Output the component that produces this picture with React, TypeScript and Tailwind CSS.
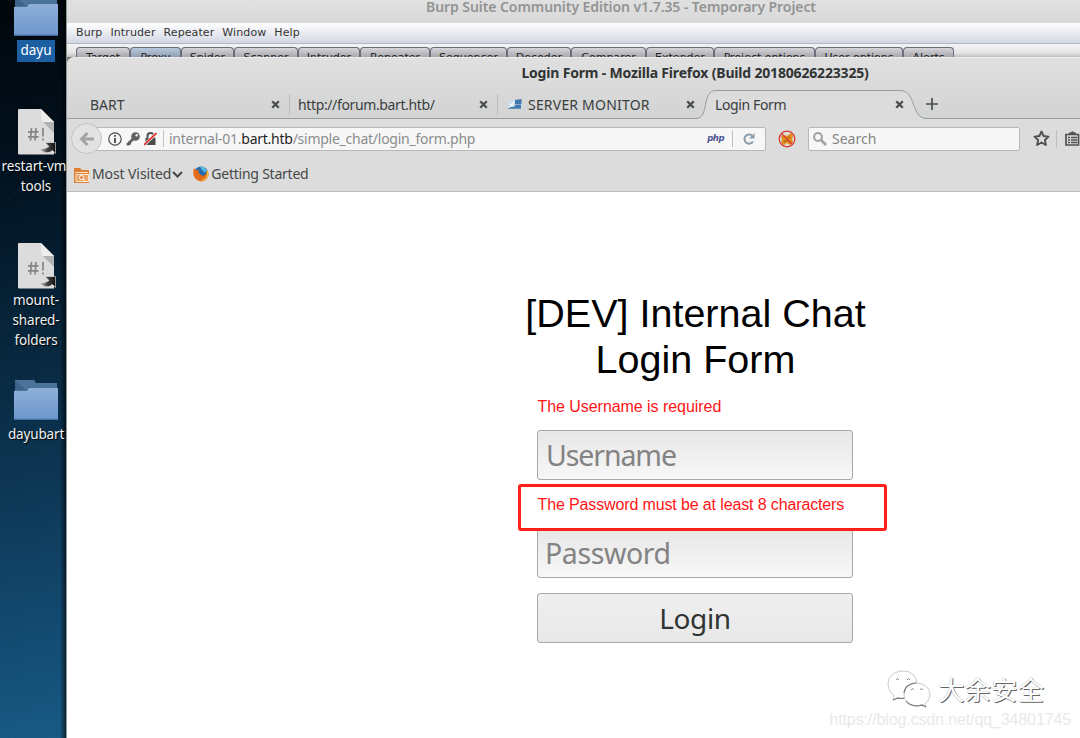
import React from "react";

const ui = "font-['Noto_Sans','Open_Sans',sans-serif]";

function CloseMark() {
  return (
    <svg className="h-[9px] w-[9px] shrink-0" viewBox="0 0 9 9">
      <path d="M1.2 1.2 7.8 7.8M7.8 1.2 1.2 7.8" stroke="#4a4d4d" strokeWidth="2.3" />
    </svg>
  );
}

function Folder() {
  return (
    <svg className="h-[40px] w-[44px] shrink-0" viewBox="0 0 44 40">
      <defs>
        <linearGradient id="folderFront" x1="0" y1="0" x2="0" y2="1">
          <stop offset="0" stopColor="#8eafd9" />
          <stop offset="1" stopColor="#6d97ce" />
        </linearGradient>
      </defs>
      <path d="M1 0H20L22 3H43V12H1Z" fill="#4c7399" />
      <path d="M1 1 12 10H1Z" fill="#3c6286" />
      <path d="M0 11H13L15 8H44V39.500H0Z" fill="url(#folderFront)" />
      <path d="M0 39H44" stroke="#5380bb" />
    </svg>
  );
}

function ScriptFile() {
  return (
    <svg className="ml-[2px] h-[46px] w-[38px] shrink-0" viewBox="0 0 38 46">
      <defs>
        <linearGradient id="arrowShade" x1="0" y1="0" x2="1" y2="0">
          <stop offset="0" stopColor="#d0d0d0" />
          <stop offset=".5" stopColor="#444" />
          <stop offset="1" stopColor="#111" />
        </linearGradient>
      </defs>
      <path d="M1 0H23L36 13V45.500H1Q0 45.500 0 44.500V1Q0 0 1 0Z" fill="#dcdcdc" />
      <path d="M24 12H36V24Z" fill="#b2b2b2" />
      <path d="M23 0 36 13H25.500Q23.500 13 23.500 10Z" fill="#eee" />
      <path d="M13.500 19 12.500 31.500M18 19 17 31.500M10 22.800H20.500M10 27.800H20.500M25 19V27.500M25 29.500V31.500" stroke="#858585" strokeWidth="1.700" fill="none" />
      <path d="M27 33.500H37.500V44.500L34.500 41.500Q28 47 21 39.500Q27 41 31 37.500Z" fill="url(#arrowShade)" stroke="#e8e8e8" strokeWidth=".6" />
    </svg>
  );
}

function DesktopLabel({ children }: { children: React.ReactNode }) {
  return (
    <div className="w-[80px] shrink-0 text-center text-[13.5px] leading-[20px] tracking-[-.15px] text-[#eef2f4] [text-shadow:1px_1px_1px_#000]">
      {children}
    </div>
  );
}

function Desktop() {
  return (
    <aside className="relative flex w-[66px] shrink-0 flex-col items-center overflow-hidden bg-[linear-gradient(170deg,#00060a_0%,#000e1a_20%,#06243a_45%,#0c3553_65%,#124970_85%,#175983_100%)]">
      <div className="absolute inset-0 bg-[repeating-linear-gradient(130deg,transparent_0px,rgba(110,190,220,.02)_3px,transparent_6px)]" />
      <div className="absolute inset-y-0 right-0 w-[6px] bg-linear-to-r from-transparent to-black/60" />
      <div className="relative ml-[6px] flex flex-col items-center">
        <div className="-mt-[4px] flex"><Folder /></div>
        <div className="mt-[4px] h-[22px] w-[38px] bg-[#1d5fa3] text-center text-[13.5px] leading-[21px] text-white">dayu</div>
        <div className="mt-[47px] flex"><ScriptFile /></div>
        <div className="mt-[1px] flex"><DesktopLabel>restart-vm-<br />tools</DesktopLabel></div>
        <div className="mt-[47px] flex"><ScriptFile /></div>
        <div className="mt-[1px] flex"><DesktopLabel>mount-<br />shared-<br />folders</DesktopLabel></div>
        <div className="mt-[30px] flex"><Folder /></div>
        <div className="mt-[4px] flex"><DesktopLabel>dayubart</DesktopLabel></div>
      </div>
    </aside>
  );
}

const burpTabs = [
  ["Target", "w-[54px]"],
  ["Proxy", "w-[51px]"],
  ["Spider", "w-[53px]"],
  ["Scanner", "w-[64px]"],
  ["Intruder", "w-[62px]"],
  ["Repeater", "w-[70px]"],
  ["Sequencer", "w-[77px]"],
  ["Decoder", "w-[64px]"],
  ["Comparer", "w-[75px]"],
  ["Extender", "w-[68px]"],
  ["Project options", "w-[101px]"],
  ["User options", "w-[88px]"],
  ["Alerts", "w-[51px]"],
];

function BurpWindow() {
  return (
    <div className="flex h-[57px] shrink-0 flex-col overflow-hidden">
      <div className="flex h-[23px] shrink-0 items-start justify-center bg-linear-to-b from-[#e0e0e0] to-[#d9d9d9] pl-[95px]">
        <span className="-mt-[3px] text-[14px] leading-[20px] font-semibold tracking-[-.07px] whitespace-nowrap text-[#929494]">
          Burp Suite Community Edition v1.7.35 - Temporary Project
        </span>
      </div>
      <div className="flex h-[21px] shrink-0 items-center gap-[8px] border-b border-[#b3b6c3] bg-linear-to-b from-white to-[#d3d7e3] pl-[9px] font-['DejaVu_Sans'] text-[11px] tracking-[.1px] text-[#333]">
        <span>Burp</span><span>Intruder</span><span>Repeater</span><span>Window</span><span>Help</span>
      </div>
      <div className="flex h-[18px] shrink-0 bg-linear-to-b from-[#f4f4f4] via-[#e4e4e4] to-[#8f8f8f] pt-[3px] pl-[9px]">
        {burpTabs.map(([name, width]) => (
          <div
            key={name}
            className={`${width} h-[22px] shrink-0 rounded-t-[4px] border border-b-0 border-[#696d78] text-center font-['DejaVu_Sans'] text-[11px] leading-[19px] whitespace-nowrap text-[#222] ${
              name === "Proxy" ? "bg-linear-to-b from-[#b9c9dc] to-[#5d6b7c]" : "bg-linear-to-b from-[#d5d5da] to-[#6e6e74]"
            }`}
          >
            {name}
          </div>
        ))}
      </div>
    </div>
  );
}

function TabStrip() {
  return (
    <div className="flex h-[29px] shrink-0 items-center border-b border-[#9b9d9d] text-[14px] text-[#3b3e3e]">
      <div className="flex h-[21px] w-[223px] shrink-0 items-center justify-between border-r border-[#b9bbbb] pr-[9px] pl-[23px]">
        <span>BART</span><CloseMark />
      </div>
      <div className="flex h-[21px] w-[208px] shrink-0 items-center justify-between border-r border-[#b9bbbb] pr-[9px] pl-[8px]">
        <span className="tracking-[-.37px]">http://forum.bart.htb/</span><CloseMark />
      </div>
      <div className="flex w-[198px] shrink-0 items-center pl-[10px]">
        <svg className="mr-[6px] h-[11px] w-[14px] shrink-0" viewBox="0 0 14 11">
          <path d="M0 1H14V10H0Z" fill="#cbdce8" />
          <path d="M7 1 13.500 0V5H7ZM7.500 5.500H13V10H3L2 8H5L7 7Z" fill="#3f79ae" />
          <path d="M2 4.500 3.500 6.500 6 2.500" stroke="#f5fafc" strokeWidth="1.300" fill="none" />
          <path d="M0 9.500H13" stroke="#5f93bb" />
        </svg>
        <span className="w-[158px] shrink-0 tracking-[.2px]">SERVER MONITOR</span>
        <CloseMark />
      </div>
      <div className="relative flex h-[29px] w-[230px] shrink-0 items-center justify-between pr-[22px] pl-[19px]">
        <svg className="absolute -top-px left-0 h-[31px] w-[232px]" viewBox="0 0 232 31">
          <path d="M0 29.500C14 29.500 5 1.500 20 1.500H204C221 1.500 214 29.500 231 29.500H232V31H0Z" fill="#dcdcdc" />
          <path d="M0 29.500C14 29.500 5 1.500 20 1.500H204C221 1.500 214 29.500 231 29.500H232" fill="none" stroke="#979d9f" />
        </svg>
        <span className="relative tracking-[-.37px]">Login Form</span>
        <span className="relative flex"><CloseMark /></span>
      </div>
      <svg className="h-[12px] w-[12px] shrink-0" viewBox="0 0 12 12">
        <path d="M6 0V12M0 6H12" stroke="#4a4d4d" strokeWidth="1.700" />
      </svg>
    </div>
  );
}

function AddressRow() {
  return (
    <div className="flex h-[39px] shrink-0 items-center pl-[4px]">
      <div className="relative z-10 flex h-[31px] w-[31px] shrink-0 items-center justify-center rounded-full border border-[#c3c3c3] bg-[#e2e2e2]">
        <svg className="h-[16px] w-[16px]" viewBox="0 0 16 16">
          <path d="M15 8H3M8.500 2 2.500 8 8.500 14" fill="none" stroke="#a4a4a4" strokeWidth="3" />
        </svg>
      </div>
      <div className="-ml-[6px] flex h-[24px] w-[670px] shrink-0 items-center rounded-r-[2px] border border-[#b6b8b8] bg-[#f7f7f7] pl-[11px] text-[14px]">
        <svg className="h-[14px] w-[14px] shrink-0" viewBox="0 0 14 14">
          <circle cx="7" cy="7" r="6.200" fill="none" stroke="#4b4b4b" strokeWidth="1.200" />
          <path d="M7 6V11M7 3V4.700" stroke="#444" strokeWidth="1.800" />
        </svg>
        <svg className="ml-[4px] h-[14px] w-[14px] shrink-0" viewBox="0 0 14 14">
          <path d="M8 6 1 13M2 10 4.500 12.500" stroke="#606060" strokeWidth="2.500" />
          <circle cx="9.500" cy="4.500" r="4.300" fill="#606060" />
          <circle cx="10.700" cy="3.300" r="1.200" fill="#f7f7f7" />
        </svg>
        <svg className="ml-[4px] h-[14px] w-[13px] shrink-0" viewBox="0 0 13 14">
          <path d="M3.500 7V4A3 3 0 0 1 9.500 4V7" fill="none" stroke="#555" strokeWidth="2" />
          <path d="M1.500 6H11.500V13H1.500Z" fill="#4d4d4d" />
          <path d="M0 13 12.500 1" stroke="#f7f7f7" strokeWidth="3" />
          <path d="M0 13 12.500 1" stroke="#e12c2c" strokeWidth="1.700" />
        </svg>
        <div className="mr-[5px] ml-[6px] h-[17px] w-px shrink-0 bg-[#c4c4c4]" />
        <div className="flex-1 tracking-[-.255px] whitespace-nowrap text-[#8b8d8d]">
          internal-01.<span className="text-[#1c1f1f]">bart.htb</span>/simple_chat/login_form.php
        </div>
        <span className="font-['DejaVu_Sans'] text-[8.5px] font-bold tracking-[-.5px] text-[#4d5493] italic">php</span>
        <div className="mr-[10px] ml-[8px] h-[17px] w-px shrink-0 bg-[#bfbfbf]" />
        <svg className="mr-[10px] h-[12px] w-[12px] shrink-0" viewBox="0 0 12 12">
          <path d="M10 8.500A4.600 4.600 0 1 1 9 2.500" fill="none" stroke="#8c9eac" strokeWidth="2" />
          <path d="M11.500 0V5.500H6Z" fill="#8c9eac" />
        </svg>
      </div>
      <svg className="ml-[12px] h-[18px] w-[18px] shrink-0" viewBox="0 0 18 18">
        <path d="M3 6 6 5 9 6 13 3 15 6 14 9 15 12 12 15 9 13 6 15 3 13 4 10Z" fill="#e58a1c" />
        <path d="M6 12Q8 9 11 11M10 7 12 8" fill="none" stroke="#8b5712" />
        <circle cx="9" cy="9" r="7.800" fill="none" stroke="#d83b34" strokeWidth="1.300" />
        <path d="M3.500 3.500 14.500 14.500" stroke="#d83b34" strokeWidth="1.300" />
      </svg>
      <div className="ml-[12px] flex h-[24px] w-[212px] shrink-0 items-center rounded-[2px] border border-[#b6b8b8] bg-[#f7f7f7] pl-[4px] text-[14px] text-[#838585]">
        <svg className="mr-[5px] h-[14px] w-[14px]" viewBox="0 0 14 14">
          <circle cx="5" cy="5" r="3.900" fill="none" stroke="#a0a0a0" strokeWidth="2" />
          <path d="M8 8 13 13" stroke="#a0a0a0" strokeWidth="2.600" />
        </svg>
        Search
      </div>
      <svg className="ml-[13px] h-[17px] w-[17px] shrink-0" viewBox="0 0 17 17">
        <path d="M8.500 1.500 10.600 6 15.500 6.600 11.900 10 12.900 15 8.500 12.500 4.100 15 5.100 10 1.500 6.600 6.400 6Z" fill="none" stroke="#505050" strokeWidth="1.900" strokeLinejoin="round" />
      </svg>
      <div className="ml-[6px] h-[18px] w-px shrink-0 bg-[#bdbdbd]" />
      <svg className="ml-[8px] h-[15px] w-[15px] shrink-0" viewBox="0 0 15 15">
        <path d="M1 3.500H13.500V14H1Z" fill="none" stroke="#505050" strokeWidth="1.700" />
        <path d="M4 3V1.500H6Q7.500-.8 9 1.500H11V4H4Z" fill="#505050" />
        <path d="M3 6.500H5M6 6.500H12M3 9H5M6 9H12M3 11.500H5M6 11.500H12" stroke="#505050" strokeWidth="1.300" />
      </svg>
    </div>
  );
}

function BookmarksRow() {
  return (
    <div className="flex h-[34px] shrink-0 items-start border-b border-[#bcbcbc] pt-[5px] pl-[7px] text-[14px] leading-[21px] text-[#454848]">
      <svg className="mt-[5px] h-[15px] w-[16px] shrink-0" viewBox="0 0 16 15">
        <path d="M0 0H6L8 2H15V15H0Z" fill="#df8137" />
        <path d="M1.500 4.500H14M2 6.500H14.500V13.500H2Z" fill="#eda467" stroke="#fae3cf" />
        <circle cx="7.500" cy="9.500" r="2" fill="#df8137" stroke="#fff" />
        <path d="M9 11 11.500 13.500" stroke="#fff" />
      </svg>
      <span className="ml-[2px] tracking-[-.1px]">Most Visited</span>
      <svg className="mt-[8px] ml-[1px] h-[7px] w-[11px] shrink-0" viewBox="0 0 11 7">
        <path d="M1 1 5.500 5.500 10 1" fill="none" stroke="#454848" strokeWidth="2" />
      </svg>
      <svg className="mt-[3px] ml-[10px] h-[16px] w-[16px] shrink-0" viewBox="0 0 16 16">
        <circle cx="8" cy="7.500" r="7" fill="#286bab" />
        <path d="M7 1Q13 0 14 6Q11 7 9 4Z" fill="#55b8df" />
        <path d="M.8 2 3 4 6 4.500 5.500 7 8 9Q10 11 13 8L14 4Q17 8 14 12.500Q9 18 3.500 13.500Q-1 10 .8 2Z" fill="#e46b1b" />
        <path d="M14 4Q17 8 14 12Q11 16 7 14Q13 14 14 8Z" fill="#f7be3a" />
      </svg>
      <span className="ml-[2px] tracking-[-.23px]">Getting Started</span>
    </div>
  );
}

function LoginPage() {
  return (
    <main className="flex flex-1 flex-col bg-white pt-[98px] pl-[470px] font-['Liberation_Sans',Arial,sans-serif]">
      <h1 className="-ml-[20px] w-[357px] text-center text-[39.5px] leading-[46px] text-black">[DEV] Internal Chat Login Form</h1>
      <p className="mt-[15px] ml-[.5px] text-[16px] leading-[20px] tracking-[-.05px] whitespace-nowrap text-[#ff1515]">The Username is required</p>
      <input
        className={`${ui} mt-[13px] h-[50px] w-[316px] rounded-[3px] border border-[#a8a8a8] bg-linear-to-b from-[#e7e7e7] to-[#f7f7f7] pl-[8px] text-[28.5px] tracking-[-1.1px] outline-none placeholder:text-[#838383]`}
        placeholder="Username"
      />
      <div className="relative z-10 mt-[4px] -ml-[19px] h-[47px] w-[369px] rounded-[3px] border-[3px] border-[#ff2118] pt-[8px] pl-[16.5px] text-[16px] leading-[20px] tracking-[-.13px] whitespace-nowrap text-[#ff1515]">
        The Password must be at least 8 characters
      </div>
      <input
        type="text"
        className={`${ui} -mt-[3px] h-[50px] w-[316px] rounded-[3px] border border-[#a8a8a8] bg-linear-to-b from-[#e7e7e7] to-[#f7f7f7] pl-[7px] text-[28.5px] tracking-[-.4px] outline-none placeholder:text-[#838383]`}
        placeholder="Password"
      />
      <button className={`${ui} mt-[15px] h-[50px] w-[316px] rounded-[3px] border border-[#a8a8a8] bg-linear-to-b from-[#efefef] to-[#e8e8e8] text-[28px] leading-[46px] tracking-[-.4px] text-[#303333]`}>
        Login
      </button>
    </main>
  );
}

function Watermark() {
  return (
    <div className="absolute right-[9px] bottom-[8px] z-20 flex flex-col items-end">
      <div className="mr-[27px] flex items-center gap-[7px]">
        <svg className="h-[38px] w-[44px]" viewBox="0 0 44 38">
          <g fill="#fff" stroke="#bbb" strokeWidth=".8">
            <path d="M16 1C7 1 1 7 1 14Q1 21 7 26L6 30 11 28Q17 30 21 27Q31 22 30 13Q28 1 16 1Z" />
            <path d="M29 13C22 13 17 18 17 25Q18 36 31 36L35 35 39 37 38 34Q43 30 43 25C43 18 37 13 29 13Z" />
            <path d="M6 30 11 28Q14 29 17 28M19 31Q23 36 31 36L35 35 39 37M17 23Q18 14 29 13" fill="none" stroke="#777" strokeWidth="1.200" />
            <path d="M9 10Q10.500 7 12 10M20 10Q21.500 7 23 10M24 20Q25.500 17 27 20M33 20Q34.500 17 36 20" fill="none" stroke="#666" />
          </g>
        </svg>
        <span className="font-['Noto_Sans_CJK_SC',sans-serif] text-[26.5px] leading-[32px] whitespace-nowrap text-white [text-shadow:1px_1px_0px_#666,0_0_1px_#999]">大余安全</span>
      </div>
      <span className="mt-[2px] font-['Liberation_Sans'] text-[16px] leading-[20px] tracking-[-.12px] whitespace-nowrap text-[#e9e9e9]">https://blog.csdn.net/qq_34801745</span>
    </div>
  );
}

export default function App() {
  return (
    <div className={`${ui} relative flex h-[738px] w-[1080px] overflow-hidden bg-white`}>
      <Desktop />
      <div className="flex min-w-0 flex-1 flex-col border-l border-[#909797] bg-[#777]">
        <BurpWindow />
        <div className="flex flex-1 flex-col overflow-hidden rounded-tl-[7px] border-t border-[#eee] bg-[#dcdcdc]">
          <div className="flex shrink-0 flex-col bg-linear-to-b from-[#e0e0e0] to-[#d2d3d3]">
            <div className="flex h-[32px] items-start justify-center pt-[5px] pl-[243px] text-[14px] leading-[20px] font-bold tracking-[-.18px] whitespace-nowrap text-[#313434]">
              Login Form - Mozilla Firefox (Build 20180626223325)
            </div>
            <TabStrip />
          </div>
          <AddressRow />
          <BookmarksRow />
          <LoginPage />
        </div>
      </div>
      <Watermark />
    </div>
  );
}
